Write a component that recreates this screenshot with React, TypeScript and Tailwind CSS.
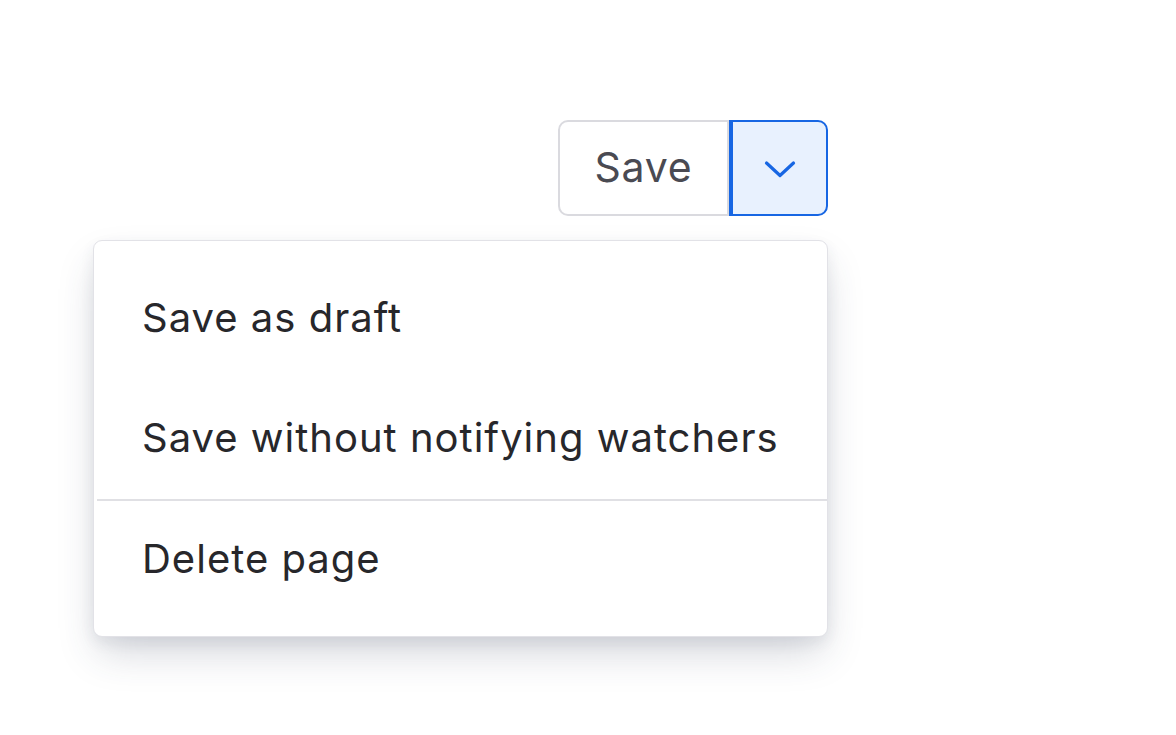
import React from "react";

// ============================
// Кнопка "Save" с выпадающим меню
// ============================

const font = {
  fontFamily: "Inter, 'Noto Sans', sans-serif",
};

function Chevron() {
  return (
    <svg width="32" height="18" viewBox="0 0 32 18" fill="none">
      <path
        d="M2.5 3 L16 15.5 L29.5 3"
        stroke="#1766e3"
        strokeWidth="3.2"
        strokeLinecap="round"
        strokeLinejoin="round"
      />
    </svg>
  );
}

const items = ["Save as draft", "Save without notifying watchers"];

export default function App() {
  return (
    <div className="min-h-screen bg-white pt-[120px] pl-[93px]" style={font}>
      <div className="w-[735px] flex flex-col items-end">
        {/* Группа кнопок */}
        <div className="flex h-[96px]">
          <button className="w-[171px] h-full border-[2.5px] border-[#dadadf] rounded-l-[10px] bg-white text-[41px] tracking-[0.02em] text-[#4a4a52]">
            Save
          </button>
          <button className="w-[99px] h-full border-2 border-l-4 border-[#1766e3] rounded-r-[10px] bg-[#e8f1fe] flex items-center justify-center pt-[2px]">
            <Chevron />
          </button>
        </div>

        {/* Меню */}
        <div className="mt-[24px] w-full bg-white border border-[#e2e2e7] rounded-[9px] shadow-[0_20px_40px_-6px_rgba(50,60,85,0.22),0_6px_14px_rgba(50,60,85,0.08)] pt-[18px] pb-[16px]">
          {items.map((label) => (
            <div
              key={label}
              className="h-[120px] flex items-center pl-[48px] text-[40px] tracking-[0.025em] text-[#27272b] pb-[2px]"
            >
              {label}
            </div>
          ))}
          <div className="h-[2px] ml-[3px] bg-[#e0e0e4]" />
          <div className="h-[119px] flex items-center pl-[48px] text-[40px] tracking-[0.025em] text-[#27272b] pb-[4px]">
            Delete page
          </div>
        </div>
      </div>
    </div>
  );
}
